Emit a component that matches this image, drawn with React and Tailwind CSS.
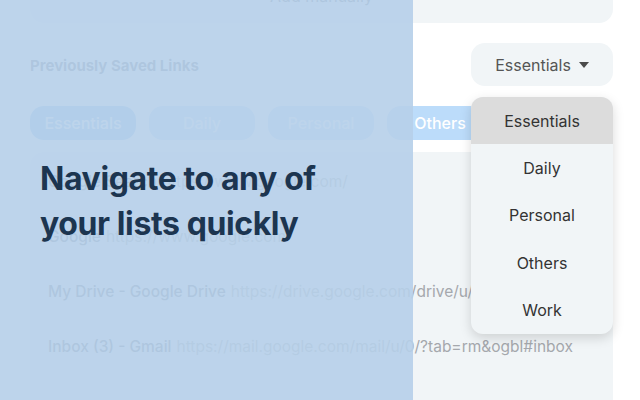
import React from 'react';

const tabs = ['Essentials', 'Daily', 'Personal', 'Others', 'Work'];

const links = [
  { title: 'Google Search', url: 'https://www.google.com/' },
  { title: 'Google', url: 'https://www.google.com' },
  { title: 'My Drive - Google Drive', url: 'https://drive.google.com/drive/u/' },
  { title: 'Inbox (3) - Gmail', url: 'https://mail.google.com/mail/u/0/?tab=rm&ogbl#inbox' },
];

function Caret() {
  return (
    <svg width="10" height="6" viewBox="0 0 10 6" className="ml-[8px] mt-[1px]">
      <path d="M0 0h10L5 6z" fill="#4b4b4b" />
    </svg>
  );
}

export default function App() {
  return (
    <div
      className="relative w-[640px] h-[400px] overflow-hidden bg-white"
      style={{ fontFamily: 'Inter, "Noto Sans", sans-serif' }}
    >
      {/* Page underneath */}
      <div className="pl-[30px] pr-[27px]">
        {/* Add manually card */}
        <div className="mt-[-41px] h-[64px] rounded-[14px] bg-[#f1f5f7] flex items-end justify-center pb-[17px]">
          <span className="text-[16px] leading-[20px] text-[#6b7280]">Add manually</span>
        </div>

        {/* Heading + select */}
        <div className="mt-[20px] flex items-center justify-between">
          <h2 className="mt-[3px] text-[15px] font-bold text-[#6b7280]">Previously Saved Links</h2>
          <div className="w-[142px] h-[43px] rounded-[14px] bg-[#f1f5f7] flex items-center justify-center text-[16px] text-[#555]">
            Essentials
            <Caret />
          </div>
        </div>

        {/* Tabs */}
        <div className="mt-[20px] flex gap-[13px] w-[800px]">
          {tabs.map((t, i) => (
            <div
              key={t}
              className={`w-[106px] h-[34px] shrink-0 rounded-[14px] flex items-center justify-center text-[16px] font-medium text-white ${
                i === 0 ? 'bg-[#8ec0f2]' : 'bg-[#bcdcfa]'
              }`}
            >
              {t}
            </div>
          ))}
        </div>

        {/* Links list */}
        <div className="mt-[12px] h-[300px] rounded-[14px] bg-[#f1f5f7] pt-[2px] px-[18px]">
          {links.map((l) => (
            <div key={l.title} className="h-[55px] flex items-center whitespace-nowrap text-[15.5px]">
              <span className="font-medium text-[#6b7280]">{l.title}</span>
              <span className="ml-[5px] text-[#a5a8ad]">{l.url}</span>
            </div>
          ))}
        </div>
      </div>

      {/* Dropdown menu */}
      <div className="absolute left-[471px] top-[97px] w-[142px] rounded-[12px] bg-[#f1f5f7] shadow-[0_4px_12px_rgba(0,0,0,0.15)] overflow-hidden">
        {tabs.map((t, i) => (
          <div
            key={t}
            className={`h-[47.4px] flex items-center justify-center text-[16px] text-[#333] ${
              i === 0 ? 'bg-[#dcdcdc]' : ''
            }`}
          >
            {t}
          </div>
        ))}
      </div>

      {/* Overlay with caption */}
      <div className="absolute left-0 top-0 w-[413px] h-[400px] bg-[#b6cfe9]/[0.9] pl-[40px] pt-[156px]">
        <p className="text-[32px] leading-[45px] font-bold text-[#1c3550] tracking-[-0.4px]">
          Navigate to any of
          <br />
          your lists quickly
        </p>
      </div>
    </div>
  );
}
